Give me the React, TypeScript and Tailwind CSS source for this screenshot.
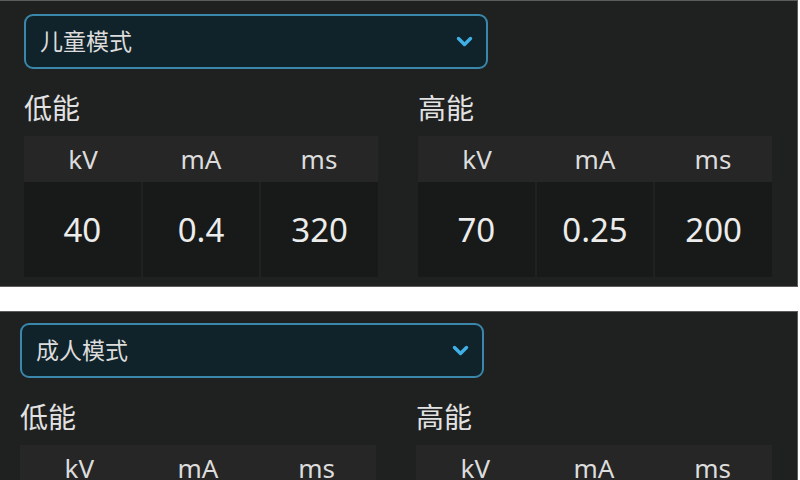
import React from "react";

const font = {
  fontFamily: '"Noto Sans", "Noto Sans CJK SC", sans-serif',
};

function Chevron() {
  return (
    <svg width="17" height="11" viewBox="0 0 17 11" fill="none">
      <path
        d="M2.5 2.5 L8.5 8.5 L14.5 2.5"
        stroke="#3fb0e6"
        strokeWidth="3.4"
        strokeLinecap="round"
        strokeLinejoin="round"
      />
    </svg>
  );
}

type Vals = { kv: string; ma: string; ms: string };

function Table({ title, v }: { title: string; v: Vals }) {
  return (
    <div className="flex flex-col">
      <div className="h-[36px] leading-[36px] mt-[21px] mb-[10px] text-[28px] text-[#e2e2e2]">
        {title}
      </div>
      <div className="grid grid-cols-3 h-[46px] bg-[#262626] text-[#dcdcdc] text-[26px]">
        <div className="flex items-center justify-center">kV</div>
        <div className="flex items-center justify-center">mA</div>
        <div className="flex items-center justify-center">ms</div>
      </div>
      <div className="grid grid-cols-3 gap-[2px] bg-[#202121] h-[95px] text-[33px] text-[#ececec]">
        <div className="flex items-center justify-center bg-[#181a19]">{v.kv}</div>
        <div className="flex items-center justify-center bg-[#181a19]">{v.ma}</div>
        <div className="flex items-center justify-center bg-[#181a19]">{v.ms}</div>
      </div>
    </div>
  );
}

function Panel({
  mode,
  low,
  high,
  first,
}: {
  mode: string;
  low: Vals;
  high: Vals;
  first: boolean;
}) {
  return (
    <div
      className={
        "w-[798px] bg-[#1f2020] border-y border-r border-[#5c5c5c] pr-[25px] " +
        (first ? "pl-[24px] pt-[13px] pb-[9px]" : "pl-[20px] pt-[11px] pb-[9px]")
      }
    >
      <div className="w-[464px] h-[55px] rounded-[9px] border-2 border-[#3a87ab] bg-[#11232a] flex items-center justify-between pl-[14px] pr-[13px]">
        <span className="text-[23px] text-[#dcdcdc]">{mode}</span>
        <Chevron />
      </div>
      <div className="grid grid-cols-2 gap-x-[40px]">
        <Table title="低能" v={low} />
        <Table title="高能" v={high} />
      </div>
    </div>
  );
}

export default function App() {
  return (
    <div className="w-[800px] h-[480px] overflow-hidden bg-white" style={font}>
      <Panel
        first
        mode="儿童模式"
        low={{ kv: "40", ma: "0.4", ms: "320" }}
        high={{ kv: "70", ma: "0.25", ms: "200" }}
      />
      <div className="h-[24px]" />
      <Panel
        first={false}
        mode="成人模式"
        low={{ kv: "60", ma: "0.5", ms: "400" }}
        high={{ kv: "90", ma: "0.3", ms: "250" }}
      />
    </div>
  );
}
